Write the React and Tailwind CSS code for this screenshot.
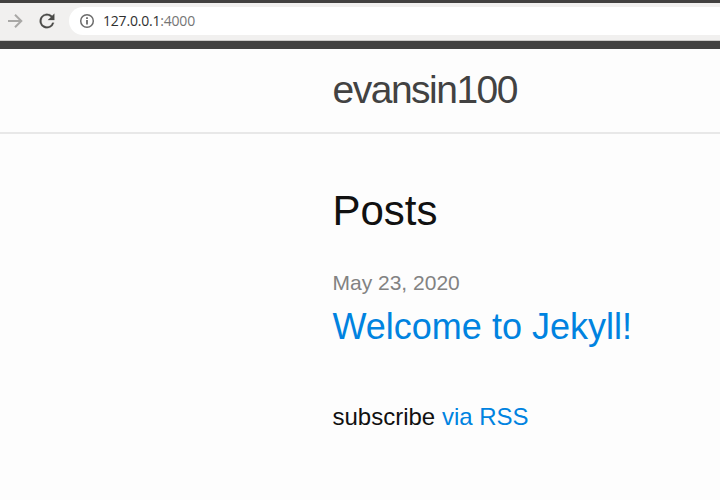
export default function App() {
  return (
    <div className="flex h-[500px] w-[720px] flex-col overflow-hidden bg-[#fdfdfd] font-['Liberation_Sans',Arial,sans-serif] text-[#111]">
      <header className="h-[49px] shrink-0 border-t-[3px] border-b-8 border-[#424140] bg-[#f1f0ef]">
        <div className="flex h-[38px] items-center border-b border-[#cccac8] pb-px">
          <svg className="ml-[6px] size-[18px] shrink-0 text-[#a9a8a6]" viewBox="0 0 18 18" fill="none" stroke="currentColor" strokeWidth="2">
            <path d="M2 9h13M9 2.7 15.3 9 9 15.3" />
          </svg>
          <svg className="ml-[12px] size-[22px] shrink-0 text-[#4a4a48]" viewBox="0 0 24 24" fill="currentColor" stroke="currentColor" strokeWidth="0.25">
            <path d="M17.65 6.35A8 8 0 1 0 19.73 14h-2.08A6 6 0 1 1 12 6c1.66 0 3.14.69 4.22 1.78L13 11h7V4z" />
          </svg>
          <div className="ml-[11px] flex h-[28px] flex-1 items-center rounded-l-full bg-white pl-[10px]">
            <svg className="size-4 text-[#6c6c6c]" viewBox="0 0 16 16" fill="none" stroke="currentColor" strokeWidth="1.5">
              <circle cx="8" cy="8" r="6.3" />
              <path strokeWidth="1.8" d="M8 7v4.5M8 4.3v1.6" />
            </svg>
            <div className="ml-2 font-['Open_Sans',sans-serif] text-[14px] leading-5 tracking-[-0.2px] text-[#757575]">
              <span className="text-[#303030]">127.0.0.1</span>:4000
            </div>
          </div>
        </div>
      </header>
      <div className="h-[85px] shrink-0 border-b-2 border-[#e8e8e8] pl-[332.5px]">
        <a className="block text-[39px] leading-[81px] tracking-[-1.5px] text-[#424242]">evansin100</a>
      </div>
      <main className="pl-[332.5px]">
        <h2 className="pt-[45px] text-[42px] leading-[63px]">Posts</h2>
        <p className="pt-[25px] text-[21px] leading-[32px] text-[#828282]">May 23, 2020</p>
        <h3 className="pt-px text-[36px] leading-[54px] text-[#0083e0]">Welcome to Jekyll!</h3>
        <p className="pt-[45px] text-[24px] leading-[36px]">subscribe <a className="text-[#0083e0]">via RSS</a></p>
      </main>
    </div>
  );
}
